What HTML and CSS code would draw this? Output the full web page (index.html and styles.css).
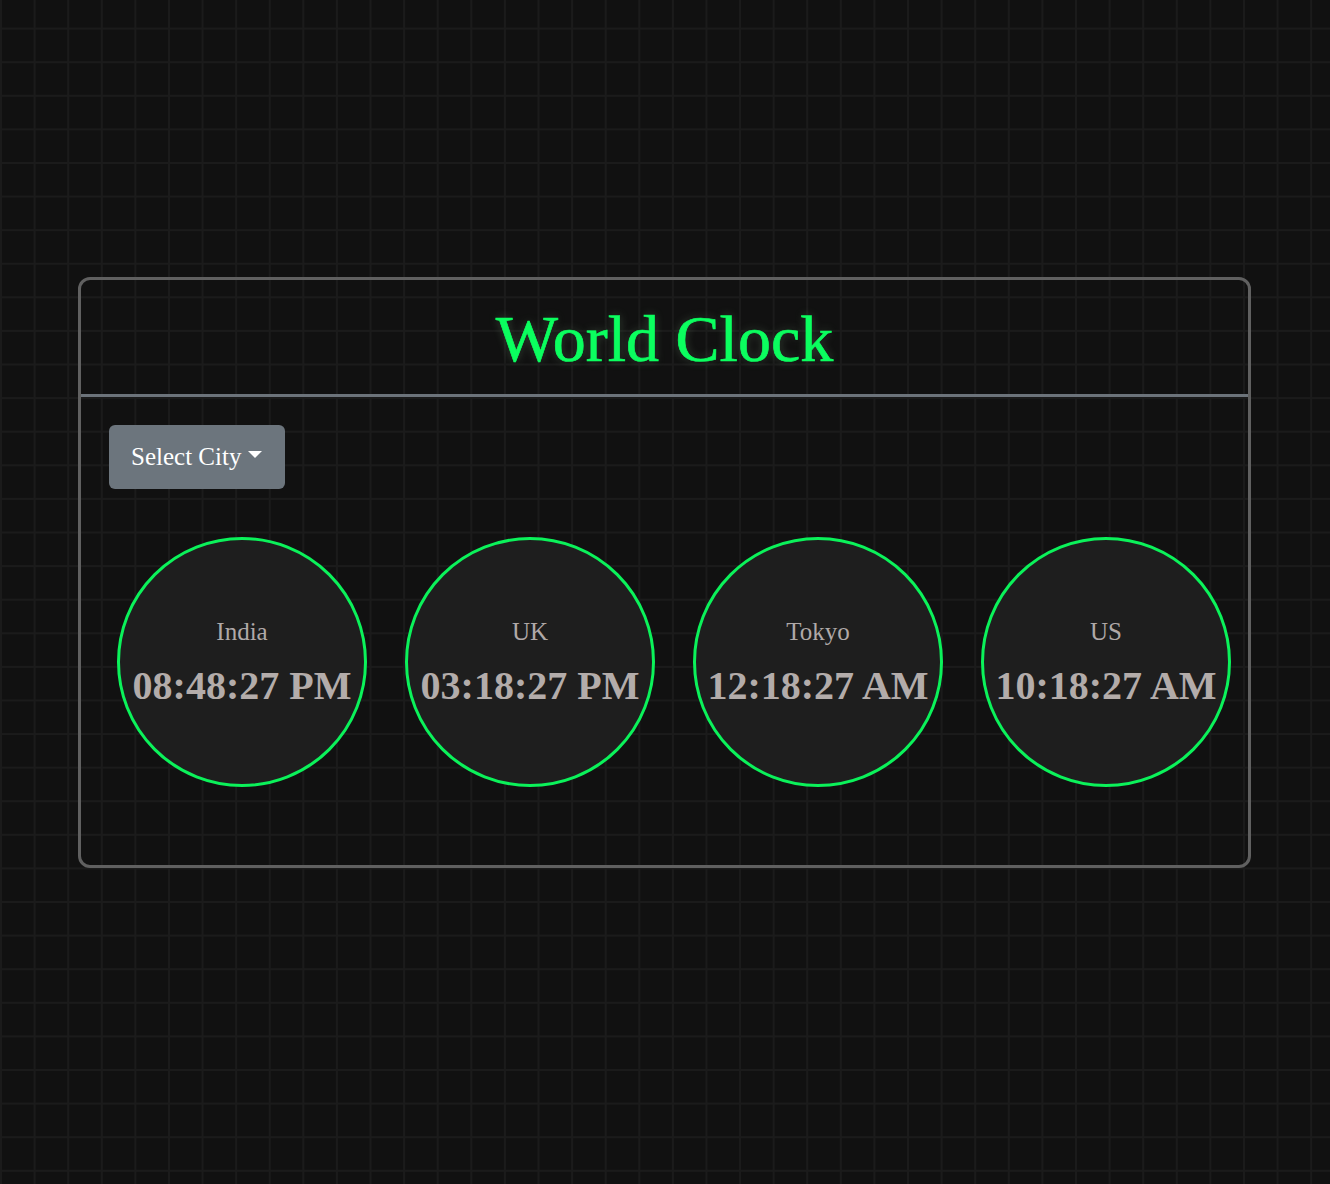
FILE: index.html
```html
<!DOCTYPE html>
<html lang="en">
<head>
<meta charset="utf-8">
<title>World Clock</title>
<link rel="stylesheet" href="styles.css">
</head>
<body>
<main class="page">
  <section class="card">
    <header class="card-header">
      <h1 class="title">World Clock</h1>
    </header>
    <div class="card-body">
      <button class="btn-select" type="button">Select City<span class="caret"></span></button>
      <div class="clocks">
        <div class="clock"><div class="city">India</div><div class="time">08:48:27 PM</div></div>
        <div class="clock"><div class="city">UK</div><div class="time">03:18:27 PM</div></div>
        <div class="clock"><div class="city">Tokyo</div><div class="time">12:18:27 AM</div></div>
        <div class="clock"><div class="city">US</div><div class="time">10:18:27 AM</div></div>
      </div>
    </div>
  </section>
</main>
</body>
</html>
```

FILE: styles.css
```css
* { box-sizing: border-box; }
html, body { margin: 0; padding: 0; }
body {
  width: 1330px;
  min-height: 1184px;
  background-color: #111111;
  background-image:
    linear-gradient(to right, #1b1b1b 2px, transparent 2px),
    linear-gradient(to bottom, #1b1b1b 2px, transparent 2px);
  background-size: 33.6px 33.6px;
  background-position: 0 -6px;
  font-family: "Liberation Serif", "Times New Roman", serif;
  color: #b3acaa;
}
.page {
  padding: 277px 79px 0 78px;
}
.card {
  border: 3px solid #606060;
  border-radius: 12px;
  height: 591px;
}
.card-header {
  border-bottom: 3px solid #6c737a;
  height: 117px;
  display: flex;
  justify-content: center;
  align-items: center;
}
.title {
  margin: 4px 0 0 0;
  font-size: 66px;
  font-weight: normal;
  color: #0bff5f;
  -webkit-text-stroke: 0.7px #0bff5f;
  text-shadow: 0 0 10px rgba(200, 255, 200, 0.25), 0 0 4px rgba(0, 0, 0, 0.6);
  letter-spacing: 0;
}
.card-body {
  padding: 28px 0 0 28px;
}
.btn-select {
  display: inline-flex;
  align-items: center;
  height: 64px;
  width: 176px;
  padding: 0 0 0 22px;
  border: none;
  border-radius: 6px;
  background: #6c757d;
  color: #ffffff;
  font-family: "Liberation Serif", "Times New Roman", serif;
  font-size: 25px;
}
.caret {
  display: inline-block;
  margin-left: 7px;
  margin-top: -6px;
  width: 0;
  height: 0;
  border-left: 7px solid transparent;
  border-right: 7px solid transparent;
  border-top: 7px solid #ffffff;
}
.clocks {
  display: flex;
  gap: 38px;
  margin-top: 48px;
  padding-left: 8px;
}
.clock {
  width: 250px;
  height: 250px;
  border-radius: 50%;
  border: 3px solid #0bf25a;
  background: #1e1e1e;
  display: flex;
  flex-direction: column;
  align-items: center;
  justify-content: center;
  padding-bottom: 0;
}
.city {
  font-size: 25px;
  color: #b0a9a8;
  line-height: 1;
}
.time {
  margin-top: 22px;
  font-size: 40px;
  font-weight: bold;
  color: #b3acaa;
  line-height: 1;
  white-space: nowrap;
}
```
